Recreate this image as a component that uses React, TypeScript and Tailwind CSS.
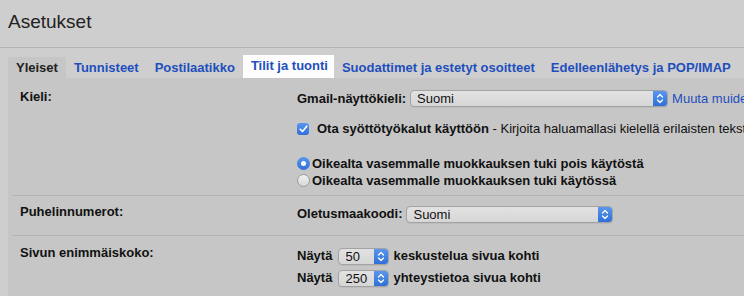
import React from "react";

function Chevrons() {
  return (
    <svg width="8" height="11" viewBox="0 0 8 11" fill="none">
      <path d="M1.5 4 L4 1.5 L6.5 4" stroke="white" strokeWidth="1.3" strokeLinecap="round" strokeLinejoin="round" />
      <path d="M1.5 7 L4 9.5 L6.5 7" stroke="white" strokeWidth="1.3" strokeLinecap="round" strokeLinejoin="round" />
    </svg>
  );
}

function Select({ value, widthClass }: { value: string; widthClass: string }) {
  return (
    <div
      className={`${widthClass} h-[17px] flex items-stretch rounded-[4px] border border-[#a3a3a3] bg-gradient-to-b from-[#e2e2e2] to-[#d6d6d6] shadow-[0_1px_0_rgba(0,0,0,0.05)] overflow-hidden shrink-0`}
    >
      <div className="flex-1 pl-[6px] text-[13px] leading-[15px] text-[#111] font-normal">{value}</div>
      <div className="w-[14px] flex items-center justify-center bg-gradient-to-b from-[#5a96ee] to-[#2f6fd8]">
        <Chevrons />
      </div>
    </div>
  );
}

function Tab({ label, active, hover }: { label: string; active?: boolean; hover?: boolean }) {
  if (active) {
    return (
      <div className="h-[21px] px-2 flex items-center bg-[#c6c6c6] text-[#222] font-bold text-[13px] shrink-0">{label}</div>
    );
  }
  if (hover) {
    return (
      <div className="h-[23px] pb-[1px] pl-2 pr-[6px] flex items-center bg-[#fdfdfd] text-[#1e4fbd] font-bold text-[13px] shrink-0">{label}</div>
    );
  }
  return <div className="h-[21px] px-2 flex items-center text-[#1e4fbd] font-bold text-[13px] shrink-0">{label}</div>;
}

function Radio({ checked }: { checked?: boolean }) {
  if (checked) {
    return (
      <div className="w-[13px] h-[13px] rounded-full bg-gradient-to-b from-[#5a96ee] to-[#2f6fd8] flex items-center justify-center shrink-0">
        <div className="w-[5px] h-[5px] rounded-full bg-white" />
      </div>
    );
  }
  return <div className="w-[13px] h-[13px] rounded-full border border-[#9c9c9c] bg-gradient-to-b from-[#f0f0f0] to-[#d8d8d8] shrink-0" />;
}

export default function App() {
  return (
    <div
      className="w-[744px] h-[296px] overflow-hidden bg-[#cecece] text-[#1a1a1a] whitespace-nowrap"
      style={{ fontFamily: '"Liberation Sans", Arial, sans-serif' }}
    >
      <div className="h-[48px] border-b border-[#b4b4b4] pl-2 pt-[11px]">
        <div className="text-[19px] leading-[22px] text-[#222]">Asetukset</div>
      </div>
      <div className="h-[30px] ml-2 flex items-end">
        <Tab label="Yleiset" active />
        <Tab label="Tunnisteet" />
        <Tab label="Postilaatikko" />
        <Tab label="Tilit ja tuonti" hover />
        <Tab label="Suodattimet ja estetyt osoitteet" />
        <Tab label="Edelleenlähetys ja POP/IMAP" />
      </div>
      <div className="ml-2 bg-[#c6c6c6] h-[218px] pl-[4px] text-[13px]">
        {/* Kieli */}
        <div className="flex border-b border-[#b4b4b4] h-[118px]">
          <div className="w-[285px] shrink-0 pl-[8px] pt-[10px] font-bold leading-[17px] text-[#111]">Kieli:</div>
          <div className="pt-[10px] min-w-0">
            <div className="h-[21px] flex items-center">
              <span className="font-bold text-[#111]">Gmail-näyttökieli:</span>
              <div className="ml-[4px]">
                <Select value="Suomi" widthClass="w-[258px]" />
              </div>
              <span className="ml-[4px] text-[#1e4fbd]">Muuta muiden kielten asetuksia</span>
            </div>
            <div className="mt-[10px] h-[20px] flex items-center">
              <div className="w-[12px] h-[12px] shrink-0 rounded-[3px] bg-gradient-to-b from-[#5a96ee] to-[#2f6fd8] flex items-center justify-center">
                <svg width="9" height="8" viewBox="0 0 9 8" fill="none">
                  <path d="M1.2 4.2 L3.5 6.5 L7.8 1.2" stroke="white" strokeWidth="1.6" strokeLinecap="round" strokeLinejoin="round" />
                </svg>
              </div>
              <span className="ml-[8px] font-bold text-[#111]">Ota syöttötyökalut käyttöön</span>
              <span className="text-[#111]">&nbsp;- Kirjoita haluamallasi kielellä erilaisten tekstinsyöttötyökalujen avulla</span>
            </div>
            <div className="mt-[16px]">
              <div className="h-[17px] flex items-center">
                <Radio checked />
                <span className="ml-[2px] font-bold text-[#111]">Oikealta vasemmalle muokkauksen tuki pois käytöstä</span>
              </div>
              <div className="h-[17px] flex items-center">
                <Radio />
                <span className="ml-[2px] font-bold text-[#111]">Oikealta vasemmalle muokkauksen tuki käytössä</span>
              </div>
            </div>
          </div>
        </div>
        {/* Puhelinnumerot */}
        <div className="flex border-b border-[#b4b4b4] h-[40px]">
          <div className="w-[285px] shrink-0 pl-[8px] pt-[7px] font-bold leading-[17px] text-[#111]">Puhelinnumerot:</div>
          <div className="pt-[8px]">
            <div className="h-[20px] flex items-center">
              <span className="font-bold text-[#111]">Oletusmaakoodi:</span>
              <div className="ml-[4px]">
                <Select value="Suomi" widthClass="w-[207px]" />
              </div>
            </div>
          </div>
        </div>
        {/* Sivun enimmäiskoko */}
        <div className="flex">
          <div className="w-[285px] shrink-0 pl-[8px] pt-[8px] font-bold leading-[17px] text-[#111]">Sivun enimmäiskoko:</div>
          <div className="pt-[9px]">
            <div className="h-[22px] flex items-center">
              <span className="font-bold text-[#111]">Näytä</span>
              <div className="ml-[6px]">
                <Select value="50" widthClass="w-[51px]" />
              </div>
              <span className="ml-[4px] font-bold text-[#111]">keskustelua sivua kohti</span>
            </div>
            <div className="h-[22px] flex items-center">
              <span className="font-bold text-[#111]">Näytä</span>
              <div className="ml-[6px]">
                <Select value="250" widthClass="w-[51px]" />
              </div>
              <span className="ml-[4px] font-bold text-[#111]">yhteystietoa sivua kohti</span>
            </div>
          </div>
        </div>
      </div>
    </div>
  );
}
